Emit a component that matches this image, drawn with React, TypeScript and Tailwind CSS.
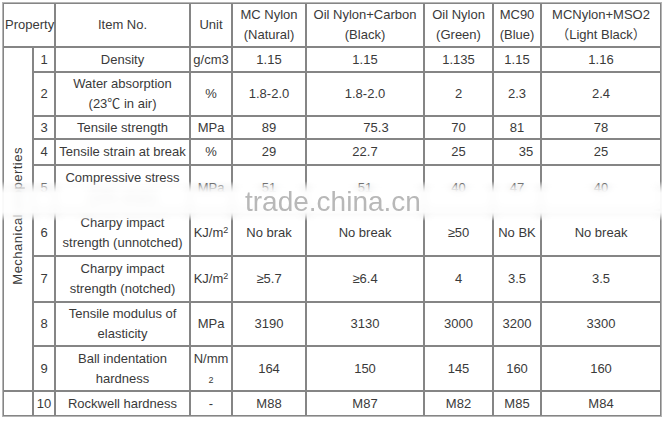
import type { ReactNode } from "react";

interface SpecRow {
  no: string;
  h: string;
  item: ReactNode;
  unit: ReactNode;
  vals: ReactNode[];
}

const ROWS: SpecRow[] = [
  { no: "1", h: "h-[25px]", item: "Density", unit: "g/cm3", vals: ["1.15", "1.15", "1.135", "1.15", "1.16"] },
  {
    no: "2",
    h: "h-[44px]",
    item: (
      <>
        Water absorption
        <br />
        (23℃ in air)
      </>
    ),
    unit: "%",
    vals: ["1.8-2.0", "1.8-2.0", "2", "2.3", "2.4"],
  },
  { no: "3", h: "h-[23px]", item: "Tensile strength", unit: "MPa", vals: ["89", <span className="pl-[22px]">75.3</span>, "70", "81", "78"] },
  { no: "4", h: "h-[26px]", item: "Tensile strain at break", unit: "%", vals: ["29", "22.7", "25", <span className="pl-[18px]">35</span>, "25"] },
  {
    no: "5",
    h: "h-[45px]",
    item: (
      <>
        Compressive stress
        <br />
        (10% strain)
      </>
    ),
    unit: "MPa",
    vals: ["51", "51", "40", "47", "40"],
  },
  {
    no: "6",
    h: "h-[46px]",
    item: (
      <>
        Charpy impact
        <br />
        strength (unnotched)
      </>
    ),
    unit: (
      <>
        KJ/m<sup className="text-[9px]">2</sup>
      </>
    ),
    vals: ["No brak", "No break", "≥50", "No BK", "No break"],
  },
  {
    no: "7",
    h: "h-[46px]",
    item: (
      <>
        Charpy impact
        <br />
        strength (notched)
      </>
    ),
    unit: (
      <>
        KJ/m<sup className="text-[9px]">2</sup>
      </>
    ),
    vals: ["≥5.7", "≥6.4", "4", "3.5", "3.5"],
  },
  {
    no: "8",
    h: "h-[44px]",
    item: (
      <>
        Tensile modulus of
        <br />
        elasticity
      </>
    ),
    unit: "MPa",
    vals: ["3190", "3130", "3000", "3200", "3300"],
  },
  {
    no: "9",
    h: "h-[45px]",
    item: (
      <>
        Ball indentation
        <br />
        hardness
      </>
    ),
    unit: (
      <>
        N/mm
        <br />
        <span className="text-[9px] leading-none">2</span>
      </>
    ),
    vals: ["164", "150", "145", "160", "160"],
  },
];

const HEADERS: [string, string][] = [
  ["MC Nylon", "(Natural)"],
  ["Oil Nylon+Carbon", "(Black)"],
  ["Oil Nylon", "(Green)"],
  ["MC90", "(Blue)"],
  ["MCNylon+MSO2", "（Light Black）"],
];

const cell = "border border-[#858585] text-center align-middle px-[1px] leading-5 whitespace-nowrap";

export default function App() {
  return (
    <div className="w-[665px] h-[421px] bg-white p-[2px] text-[13px] text-[#3a3a3a] font-['Liberation_Sans','Noto_Sans_CJK_SC',sans-serif]">
      <div className="relative w-[660px]">
        <table className="table-fixed w-[660px] border-separate border-spacing-0 border border-[#b5b5b5]">
          <colgroup>
            <col className="w-[30px]" />
            <col className="w-[22px]" />
            <col className="w-[135px]" />
            <col className="w-[42px]" />
            <col className="w-[74px]" />
            <col className="w-[118px]" />
            <col className="w-[69px]" />
            <col className="w-[48px]" />
            <col className="w-[120px]" />
          </colgroup>
          <tbody>
            <tr className="h-[44px]">
              <td colSpan={2} className={cell}>
                Property
              </td>
              <td className={cell}>Item No.</td>
              <td className={cell}>Unit</td>
              {HEADERS.map(([a, b]) => (
                <td key={a} className={cell}>
                  {a}
                  <br />
                  {b}
                </td>
              ))}
            </tr>
            {ROWS.map((r, i) => (
              <tr key={r.no} className={r.h}>
                {i === 0 && (
                  <td rowSpan={9} className={cell}>
                    <span className="inline-block [writing-mode:vertical-rl] rotate-180 tracking-[0.5px]">
                      Mechanical properties
                    </span>
                  </td>
                )}
                <td className={cell}>{r.no}</td>
                <td className={cell}>{r.item}</td>
                <td className={cell}>{r.unit}</td>
                {r.vals.map((v, j) => (
                  <td key={j} className={cell}>
                    {v}
                  </td>
                ))}
              </tr>
            ))}
            <tr className="h-[25px]">
              <td className={cell}></td>
              <td className={cell}>10</td>
              <td className={cell}>Rockwell hardness</td>
              <td className={cell}>-</td>
              <td className={cell}>M88</td>
              <td className={cell}>M87</td>
              <td className={cell}>M82</td>
              <td className={cell}>M85</td>
              <td className={cell}>M84</td>
            </tr>
          </tbody>
        </table>

        {/* watermark band over the table */}
        <div className="absolute left-0 right-0 top-[179px] h-[40px] bg-white/90 backdrop-blur-[4px] [mask-image:linear-gradient(to_bottom,transparent,black_30%,black_78%,transparent)]" />
        <div className="absolute left-[243px] top-[186px] text-[28px] leading-none text-[#b8b8b8]">
          trade.china.cn
        </div>
      </div>
    </div>
  );
}
